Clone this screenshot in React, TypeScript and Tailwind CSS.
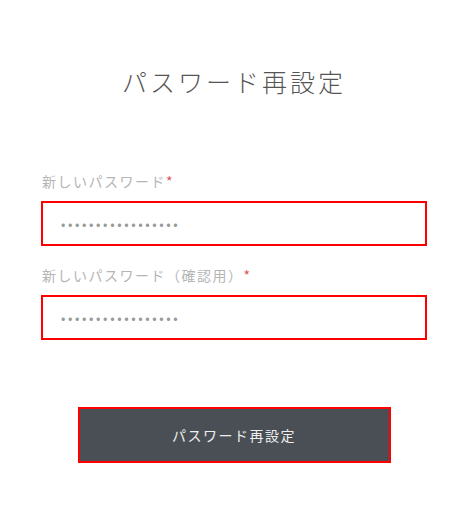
import React from "react";

export default function App() {
  const fields = [
    { label: "新しいパスワード", name: "password" },
    { label: "新しいパスワード（確認用）", name: "password_confirmation" },
  ];

  return (
    <div
      className="min-h-[530px] w-full bg-white"
      style={{ fontFamily: '"Noto Sans CJK JP", "Noto Sans", sans-serif' }}
    >
      <div className="mx-auto w-[386px] pt-[62px] translate-x-[1px]">
        <h1 className="text-center text-[25px] font-light tracking-[3px] leading-[38px] text-[#555]">
          パスワード再設定
        </h1>

        <form className="mt-[70px] flex flex-col gap-[18px]">
          {fields.map((f) => (
            <div key={f.name} className="flex flex-col">
              <label className="mb-[9px] pl-[1px] text-[14px] leading-[22px] tracking-[1.5px] text-[#b5b5b5]">
                {f.label}
                <span className="text-[#e05555]">*</span>
              </label>
              <input
                type="password"
                readOnly
                defaultValue="passwordpassword1"
                className="h-[45px] w-full border-2 border-[#ff0000] bg-white px-[18px] text-[13px] tracking-[2.6px] text-[#999] outline-none"
              />
            </div>
          ))}

          {/* Submit */}
          <div className="mt-[49px] flex justify-center">
            <button
              type="button"
              className="h-[56px] w-[313px] border-2 border-[#ff0000] bg-[#4a4f55] text-[14px] tracking-[1.5px] text-[#eee]"
            >
              パスワード再設定
            </button>
          </div>
        </form>
      </div>
    </div>
  );
}
